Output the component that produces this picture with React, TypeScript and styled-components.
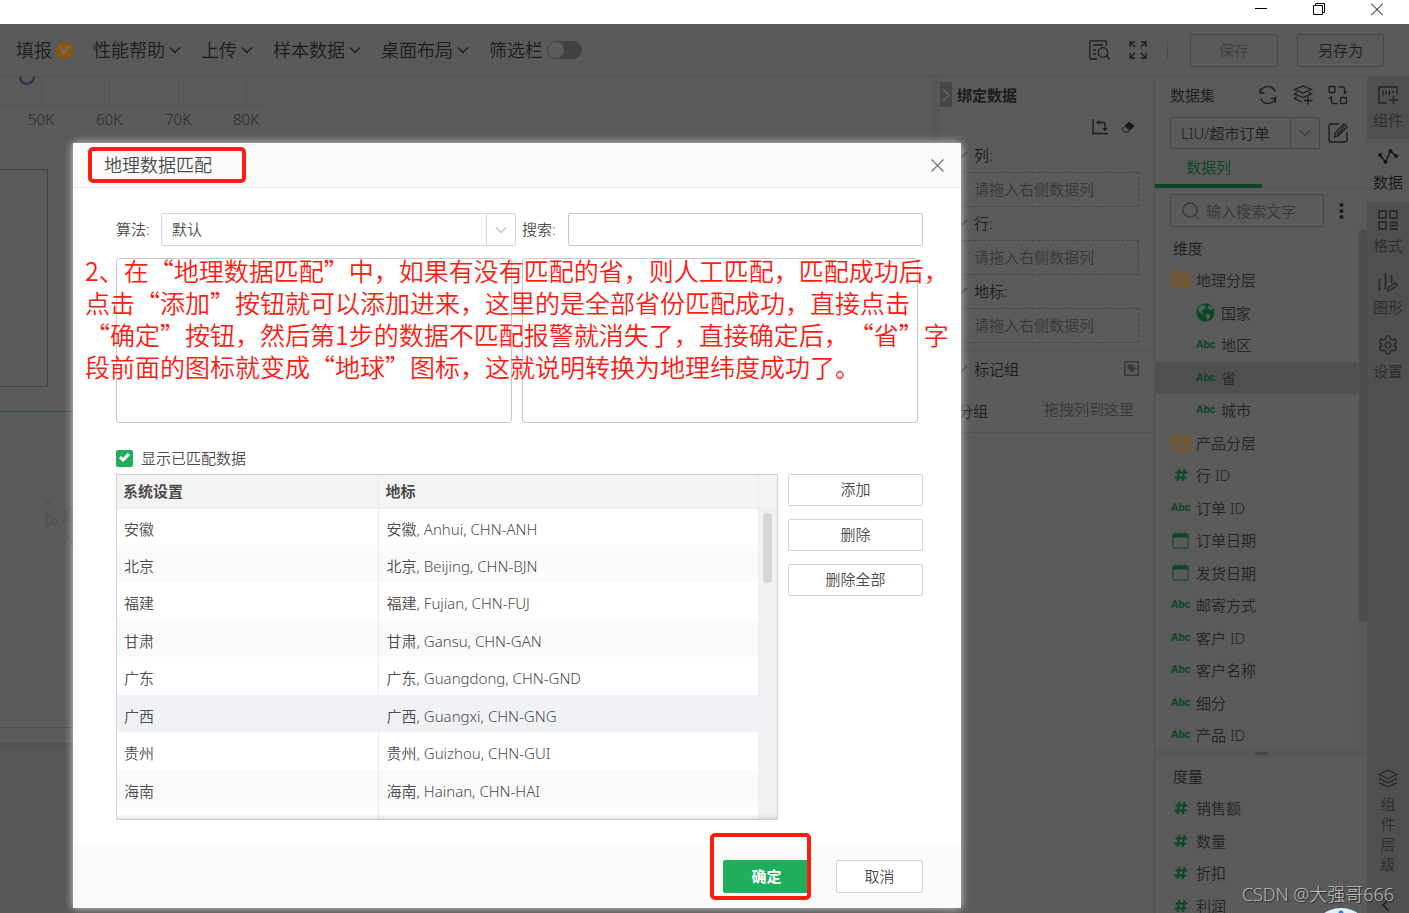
import React from "react";
import styled, { createGlobalStyle, css } from "styled-components";
import { Settings } from "lucide-react";

const color = {
  base: "#5a5a5a",
  panel: "#5b5b5b",
  gutter: "#555858",
  rail: "#505050",
  line: "#525252",
  border: "#464646",
  ink: "#1c1c1c",
  soft: "#242424",
  muted: "#383838",
  green: "#0b4826",
  orange: "#8a570c",
  red: "#ff1a12",
  brand: "#1eae5c",
  text: "#4c4c4c",
};

const GlobalStyle = createGlobalStyle`
  * { box-sizing: border-box; }
  body {
    margin: 0;
    background: ${color.base};
    font-family: "Noto Sans", "Noto Sans CJK SC", sans-serif;
    font-size: 15px;
    font-weight: 350;
    line-height: 20px;
    color: ${color.ink};
  }
  button, input, select { font: inherit; color: inherit; margin: 0; }
  button { padding: 0; border: 0; background: none; }
  svg { display: block; flex: none; }
`;

/* ---------- page frame ---------- */

const Page = styled.div`
  position: relative;
  height: 100vh;
  display: flex;
  flex-direction: column;
  overflow: hidden;
`;

const TitleBar = styled.div`
  flex: none;
  height: 24px;
  padding: 0 20px;
  display: flex;
  justify-content: flex-end;
  align-items: flex-start;
  gap: 34px;
  background: #fff;
`;

const WindowButton = styled.button`
  width: 24px;
  height: 19px;
  display: grid;
  place-items: center;
`;

const Toolbar = styled.header`
  flex: none;
  height: 53px;
  padding: 0 25px 0 16px;
  display: flex;
  align-items: center;
  border-bottom: 1px solid ${color.line};
`;

const Menu = styled.nav`
  display: flex;
  align-items: center;
  gap: 20px;
`;

const MenuButton = styled.button`
  display: flex;
  align-items: center;
  gap: 4px;
  font-size: 18px;
  line-height: 24px;
`;

const MenuSwitch = styled.label`
  display: flex;
  align-items: center;
  gap: 4px;
  font-size: 18px;
  line-height: 24px;
`;

const Switch = styled.input`
  appearance: none;
  width: 35px;
  height: 18px;
  border-radius: 9px;
  background: #424242;
  padding: 1px;
  &::before {
    content: "";
    display: block;
    width: 16px;
    height: 16px;
    border-radius: 50%;
    background: #5c5c5c;
  }
`;

const Tools = styled.div`
  margin-left: auto;
  display: flex;
  align-items: center;
`;

const ToolIcon = styled.button<{ $gap: number }>`
  margin-right: ${(p) => p.$gap}px;
`;

const Separator = styled.span`
  width: 1px;
  height: 17px;
  margin-right: 22px;
  background: #4b4b4b;
`;

const ToolButton = styled.button<{ $last?: boolean }>`
  width: ${(p) => (p.$last ? 87 : 88)}px;
  height: 33px;
  margin-left: ${(p) => (p.$last ? 19 : 0)}px;
  border: 1px solid ${color.border};
  border-radius: 2px;
  &:disabled { color: #404040; }
`;

const Main = styled.main`
  flex: 1;
  min-height: 0;
  display: flex;
`;

/* ---------- canvas behind the dialog ---------- */

const Canvas = styled.section`
  flex: 1;
  min-width: 0;
  display: flex;
  flex-direction: column;
  background: ${color.panel};
`;

const Card = styled.div`
  width: 48px;
  height: 218px;
  border: 1px solid #424242;
  border-left: 0;
`;

const MapArea = styled.div`
  height: 317px;
  margin-top: 24px;
  padding: 84px 0 0 42px;
  border-top: 1px solid #2f4c55;
  border-bottom: 1px solid #3d565b;
`;

const CanvasEnd = styled.div`
  flex: 1;
  margin-top: 15px;
  background: linear-gradient(#525454, #575959 10px);
`;

const Gutter = styled.div`
  flex: none;
  width: 9px;
  background: ${color.gutter};
`;

/* ---------- binding panel ---------- */

const BindPanel = styled.aside`
  flex: none;
  width: 215px;
  background: ${color.panel};
  border-right: 1px solid ${color.line};
`;

const BindHead = styled.div`
  height: 38px;
  padding-bottom: 3px;
  display: flex;
  align-items: center;
  gap: 5px;
  font-weight: 700;
`;

const Collapse = styled.button`
  width: 12px;
  height: 25px;
  border-radius: 0 2px 2px 0;
  background: #474747;
  display: grid;
  place-items: center;
`;

const BindTools = styled.div`
  height: 24px;
  padding-right: 19px;
  display: flex;
  justify-content: flex-end;
  align-items: center;
  gap: 13px;
`;

const BindGroup = styled.div`
  height: 68px;
  padding: 2px 15px 0 18px;
`;

const BindLabel = styled.div`
  height: 27px;
  display: flex;
  align-items: center;
  gap: 6px;
`;

const DropZone = styled.div`
  height: 35px;
  margin-top: 4px;
  padding-left: 15px;
  border: 1px dashed ${color.border};
  line-height: 32px;
  color: ${color.muted};
`;

const MarkGroup = styled.div`
  height: 83px;
  margin-top: 7px;
  padding: 4px 15px 0 18px;
  border: solid ${color.line};
  border-width: 1px 0;
`;

const MarkRow = styled.div`
  display: flex;
  justify-content: space-between;
  align-items: center;
`;

const GroupRow = styled(MarkRow)`
  padding: 17px 5px 0 0;
`;

const Muted = styled.span`
  padding-bottom: 4px;
  color: ${color.muted};
`;

/* ---------- data panel ---------- */

const DataPanel = styled.aside`
  flex: none;
  width: 212px;
  display: flex;
  flex-direction: column;
  background: ${color.panel};
`;

const DataHead = styled.div`
  flex: none;
  height: 40px;
  padding: 0 19px 5px 15px;
  display: flex;
  align-items: center;
  gap: 15px;
`;

const Grow = styled.span`
  flex: 1;
`;

const FieldRow = styled.div`
  flex: none;
  display: flex;
  align-items: center;
  gap: 8px;
  padding: 0 19px 0 15px;
`;

const Picker = styled.div<{ $light?: boolean; $cell: number }>`
  position: relative;
  flex: 1;
  height: ${(p) => (p.$light ? 33 : 32)}px;
  display: flex;
  border: 1px solid ${(p) => (p.$light ? "#d6d6d6" : color.border)};
  border-radius: 2px;
  select {
    appearance: none;
    width: 100%;
    border: 0;
    padding: 0 ${(p) => p.$cell + 2}px 1px 10px;
    background: none;
    outline: 0;
  }
  > span {
    position: absolute;
    top: 0;
    right: 0;
    bottom: 0;
    width: ${(p) => p.$cell}px;
    border-left: 1px solid ${(p) => (p.$light ? "#d6d6d6" : color.border)};
    display: grid;
    place-items: center;
    pointer-events: none;
  }
`;

const TabBar = styled.div`
  flex: none;
  height: 39px;
  margin-bottom: 6px;
  border-bottom: 1px solid ${color.line};
`;

const Tab = styled.button`
  width: 107px;
  height: 39px;
  border-bottom: 4px solid ${color.green};
  color: ${color.green};
`;

const SearchBox = styled.label`
  flex: 1;
  min-width: 0;
  height: 33px;
  padding-left: 10px;
  display: flex;
  align-items: center;
  gap: 6px;
  border: 1px solid ${color.border};
  border-radius: 2px;
  input {
    flex: 1;
    min-width: 0;
    padding: 0;
    border: 0;
    background: none;
    outline: 0;
  }
  input::placeholder { color: ${color.muted}; }
`;

const ScrollArea = styled.div`
  flex: none;
  height: 522px;
  display: flex;
  overflow: hidden;
`;

const ScrollTrack = styled.div`
  flex: none;
  width: 9px;
  padding: 3px 0 0 1px;
  background: #585a5a;
`;

const ScrollThumb = styled.div`
  height: 392px;
  border-radius: 4px;
  background: #4c4c4c;
`;

const FieldList = styled.ul`
  flex: 1;
  margin: 0;
  padding: 5px 0 0;
  list-style: none;
`;

const MeasureList = styled(FieldList)`
  min-height: 0;
  overflow: hidden;
  padding-top: 2px;
`;

const FieldItem = styled.li<{ $level?: number; $active?: boolean }>`
  height: 32px;
  padding: 0 0 1px ${(p) => (p.$level ? 41 : 16)}px;
  display: flex;
  align-items: center;
  gap: 6px;
  color: ${color.soft};
  background: ${(p) => (p.$active ? "#505050" : "none")};
  &:nth-child(even) { height: 33px; }
`;

const ListTitle = styled(FieldItem)`
  padding-left: 18px;
  color: ${color.ink};
`;

const Glyph = styled.span`
  width: 19px;
  height: 20px;
  display: grid;
  place-items: center;
  color: ${color.green};
`;

const Abc = styled.b`
  font: 700 11px/20px Roboto, sans-serif;
`;

const Splitter = styled.div`
  flex: none;
  height: 9px;
  display: grid;
  place-items: center;
  background: #565858;
  &::before {
    content: "";
    width: 13px;
    height: 3px;
    border-radius: 1px;
    background: #444;
  }
`;

/* ---------- icon rail ---------- */

const Rail = styled.nav`
  flex: none;
  width: 42px;
  display: flex;
  flex-direction: column;
  background: ${color.rail};
`;

const RailButton = styled.button<{ $active?: boolean }>`
  height: 62px;
  padding-bottom: 2px;
  display: flex;
  flex-direction: column;
  align-items: center;
  justify-content: center;
  gap: 5px;
  color: ${(p) => (p.$active ? "#161616" : "#2c2c2c")};
  background: ${(p) => (p.$active ? color.base : "none")};
  &:nth-child(even) { height: 63px; }
`;

const RailLayers = styled.button`
  margin: auto 0 0;
  padding: 0 13px;
  display: flex;
  flex-direction: column;
  align-items: center;
  gap: 5px;
  color: #2c2c2c;
  span { width: 15px; white-space: normal; word-break: break-all; }
`;

const RailCollapse = styled.button`
  height: 39px;
  padding: 22px 0 0 15px;
  color: ${color.ink};
`;

/* ---------- dialog ---------- */

const Dialog = styled.section`
  position: absolute;
  left: 73px;
  right: 448px;
  top: 143px;
  display: flex;
  flex-direction: column;
  background: #fff;
  border-radius: 2px;
  box-shadow: 0 0 8px rgba(255, 255, 255, 0.75);
  color: ${color.text};
`;

const DialogHead = styled.div`
  height: 45px;
  padding: 0 17px 0 31px;
  display: flex;
  align-items: center;
  justify-content: space-between;
  background: #fafafa;
  border-bottom: 1px solid #ebebeb;
  h2 { margin: 0; font-size: 18px; font-weight: 350; line-height: 24px; }
`;

const DialogBody = styled.div`
  padding: 25px 38px 25px 43px;
`;

const FormRow = styled.div`
  display: flex;
  align-items: center;
  label { flex: none; width: 45px; padding-bottom: 2px; }
  label:not(:first-child) { margin-left: 6px; width: 46px; }
`;

const TextInput = styled.input`
  flex: 1;
  min-width: 0;
  height: 33px;
  border: 1px solid #c8c8c8;
  border-radius: 2px;
  padding: 0;
  text-indent: 10px;
`;

const ListRow = styled.div`
  display: flex;
  gap: 10px;
  margin: 12px 5px 0 0;
`;

const ListBox = styled.select`
  flex: 1;
  min-width: 0;
  height: 165px;
  border: 1px solid #c8c8c8;
  border-radius: 3px;
  background: #fff;
  outline: 0;
`;

const CheckRow = styled.label`
  position: relative;
  width: max-content;
  margin: 25px 0 6px;
  display: flex;
  align-items: center;
  gap: 8px;
  svg { position: absolute; left: 3px; top: 5px; }
`;

const Checkbox = styled.input`
  appearance: none;
  width: 17px;
  height: 17px;
  border-radius: 2px;
  background: ${color.brand};
`;

const TableRow = styled.div`
  display: flex;
  gap: 10px;
`;

const TableFrame = styled.div`
  position: relative;
  flex: 1;
  height: 346px;
  display: flex;
  overflow: hidden;
  border: 1px solid #cfcfcf;
  &::after {
    content: "";
    position: absolute;
    left: 0;
    right: 0;
    bottom: 0;
    height: 5px;
    background: linear-gradient(rgba(0, 0, 0, 0), rgba(0, 0, 0, 0.1));
  }
`;

const Table = styled.table`
  flex: 1;
  height: max-content;
  border-collapse: collapse;
  table-layout: fixed;
  th, td { padding: 0 8px; text-align: left; }
  th:first-child, td:first-child { width: 261px; border-right: 1px solid #ebebeb; }
  td:first-child { padding-left: 7px; }
  th {
    height: 33px;
    padding: 0 7px;
    background: #f3f3f3;
    border-bottom: 1px solid #ebebeb;
    font-weight: 700;
  }
  th:first-child { padding-left: 6px; }
`;

const Row = styled.tr<{ $hover?: boolean }>`
  height: 38px;
  background: #fff;
  td { padding-top: 4px; }
  &:nth-child(even) { height: 37px; background: ${(p) => (p.$hover ? "#f0f1f4" : "#fafafa")}; }
  &:first-child { height: 37px; }
`;

const TableScroll = styled.div`
  width: 19px;
  background: #f0f1f3;
  &::before {
    content: "";
    display: block;
    height: 33px;
    background: #f3f3f3;
    border: solid #ebebeb;
    border-width: 0 0 1px 1px;
  }
  &::after {
    content: "";
    display: block;
    width: 9px;
    height: 70px;
    margin: 4px 5px;
    border-radius: 4px;
    background: #d6d6d6;
  }
`;

const SideButtons = styled.div`
  flex: none;
  width: 135px;
  display: flex;
  flex-direction: column;
  gap: 13px;
`;

const outlined = css`
  padding-bottom: 2px;
  border: 1px solid #d2d2d2;
  border-radius: 2px;
  background: #fff;
`;

const SideButton = styled.button`
  height: 32px;
  ${outlined}
`;

const DialogFoot = styled.div`
  height: 63px;
  padding: 0 38px;
  display: flex;
  align-items: center;
  justify-content: flex-end;
  gap: 26px;
  background: #fafafa;
`;

const FootButton = styled.button<{ $primary?: boolean }>`
  width: 87px;
  height: 33px;
  ${outlined}
  ${(p) =>
    p.$primary &&
    css`
      border-color: ${color.brand};
      background: ${color.brand};
      color: #fff;
      font-weight: 700;
    `}
`;

/* ---------- annotations over the dialog ---------- */

const Mark = styled.div<{ $foot?: boolean }>`
  position: absolute;
  border: 4px solid ${color.red};
  border-radius: 5px;
  pointer-events: none;
  ${(p) =>
    p.$foot
      ? css`right: 150px; bottom: 8px; width: 101px; height: 67px;`
      : css`left: 15px; top: 4px; width: 158px; height: 36px;`}
`;

const Note = styled.p`
  position: absolute;
  left: 12px;
  top: 111px;
  margin: 0;
  font-family: "Noto Sans CJK SC", sans-serif;
  font-size: 25px;
  font-weight: 350;
  line-height: 32px;
  white-space: nowrap;
  text-spacing-trim: space-all;
  color: ${color.red};
  pointer-events: none;
  span { display: block; }
`;

const Watermark = styled.div`
  position: absolute;
  right: 15px;
  bottom: 7px;
  font-family: "Open Sans", "Noto Sans CJK SC", sans-serif;
  font-size: 18px;
  font-weight: 300;
  line-height: 24px;
  color: #c4c4c4;
  text-shadow: 1px 1px 1px #222;
`;

const Bubble = styled.div`
  position: absolute;
  right: 38px;
  bottom: -55px;
  width: 60px;
  height: 60px;
  border-radius: 50%;
  background: radial-gradient(circle at 30px 5px, #2a7fe0 2px, #e6f0fb 3px);
`;

/* ---------- icons ---------- */

type IconProps = { w?: number; h?: number; sw?: number; stroke?: string; children: React.ReactNode };
const Icon = ({ w = 20, h = w, sw = 1.5, stroke = "currentColor", children }: IconProps) => (
  <svg width={w} height={h} viewBox={`0 0 ${w} ${h}`} fill="none" stroke={stroke} strokeWidth={sw} aria-hidden="true">
    {children}
  </svg>
);

const Chevron = ({ stroke = "currentColor" }: { stroke?: string }) => (
  <Icon w={12} h={8} stroke={stroke} sw={1.3}>
    <path d="M1 1.5 6 6.5 11 1.5" />
  </Icon>
);

const Hash = () => (
  <Icon w={14} h={14} sw={2}>
    <path d="M5.5 1 3.5 13M10.5 1 8.5 13M1.5 4.5h12M.5 9.5h12" />
  </Icon>
);

const Calendar = () => (
  <Icon w={17} h={17} sw={1}>
    <path d="M1 3.5h15v12.5H1z" />
    <path d="M.5 1.5H3V.5h1.500v1h3V.500H9v1h3V.500h1.500v1h3V5.500H.500z" fill="currentColor" stroke="none" />
  </Icon>
);

const Folder = () => (
  <Icon w={19} h={18} sw={1.5} stroke={color.orange}>
    <path d="M11 16H2a1 1 0 0 1-1-1V2a1 1 0 0 1 1-1h5l2 2h8a1 1 0 0 1 1 1v6" />
    <path d="M1 6.500h17" />
    <path d="M4 9.500q3 2 6 0M4.500 13h5" strokeWidth="1.2" />
    <circle cx="15" cy="13.5" r="3" strokeWidth="1.2" />
    <path d="m13 11.500 4 4" strokeWidth="1.2" />
  </Icon>
);

const Globe = () => (
  <Icon w={19} h={19}>
    <circle cx="9.5" cy="9.5" r="9.2" fill="currentColor" stroke="none" />
    <path
      d="M3 4.5 5.500 2l3 .5L10 4 8.500 6 6.500 7 5.500 9l2 1.500-.5 1L4 9.800 2 7zM11.500 3l3-.5 2.500 2.700-1.500 2-2.500-.7zM9 12l3-1 2.500 1.500-1.500 3-2 1.700-.5-3z"
      fill={color.panel}
      stroke="none"
    />
  </Icon>
);

/* ---------- data ---------- */

type Kind = "folder" | "globe" | "abc" | "hash" | "date";
type Field = { kind: Kind; name: string; level?: number; active?: boolean };

const dimensions: Field[] = [
  { kind: "folder", name: "地理分层" },
  { kind: "globe", name: "国家", level: 1 },
  { kind: "abc", name: "地区", level: 1 },
  { kind: "abc", name: "省", level: 1, active: true },
  { kind: "abc", name: "城市", level: 1 },
  { kind: "folder", name: "产品分层" },
  { kind: "hash", name: "行 ID" },
  { kind: "abc", name: "订单 ID" },
  { kind: "date", name: "订单日期" },
  { kind: "date", name: "发货日期" },
  { kind: "abc", name: "邮寄方式" },
  { kind: "abc", name: "客户 ID" },
  { kind: "abc", name: "客户名称" },
  { kind: "abc", name: "细分" },
  { kind: "abc", name: "产品 ID" },
];

const measures: Field[] = ["销售额", "数量", "折扣", "利润"].map((name) => ({ kind: "hash", name }));

const matches = [
  ["安徽", "安徽, Anhui, CHN-ANH"],
  ["北京", "北京, Beijing, CHN-BJN"],
  ["福建", "福建, Fujian, CHN-FUJ"],
  ["甘肃", "甘肃, Gansu, CHN-GAN"],
  ["广东", "广东, Guangdong, CHN-GND"],
  ["广西", "广西, Guangxi, CHN-GNG"],
  ["贵州", "贵州, Guizhou, CHN-GUI"],
  ["海南", "海南, Hainan, CHN-HAI"],
];

const noteLines = [
  "2、在“地理数据匹配”中，如果有没有匹配的省，则人工匹配，匹配成功后，",
  "点击“添加”按钮就可以添加进来，这里的是全部省份匹配成功，直接点击",
  "“确定”按钮，然后第1步的数据不匹配报警就消失了，直接确定后，“省”字",
  "段前面的图标就变成“地球”图标，这就说明转换为地理纬度成功了。",
];

const kindIcon: Record<Kind, React.ReactNode> = {
  folder: <Folder />,
  globe: <Globe />,
  abc: <Abc>Abc</Abc>,
  hash: <Hash />,
  date: <Calendar />,
};

const FieldRowItem = ({ field }: { field: Field }) => (
  <FieldItem $level={field.level} $active={field.active}>
    <Glyph>{kindIcon[field.kind]}</Glyph>
    {field.name}
  </FieldItem>
);

const railItems = [
  {
    label: "组件",
    icon: (
      <Icon sw={1.8}>
        <path d="M19 9V2H1v16h8" />
        <path d="M5 5.5v6M8.200 5.500v4M11.400 5.500v5M14.600 5.500v3" strokeWidth="1.5" />
        <path d="M15.500 10.500v9M11 15h9" />
      </Icon>
    ),
  },
  {
    label: "数据",
    active: true,
    icon: (
      <Icon>
        <path d="M2 8 7.5 15 12.5 4 18 9" />
        <g fill="currentColor" stroke="none">
          <circle cx="2" cy="8" r="2" />
          <circle cx="7.5" cy="15" r="2" />
          <circle cx="12.5" cy="4" r="2" />
          <circle cx="18" cy="9" r="2" />
        </g>
      </Icon>
    ),
  },
  {
    label: "格式",
    icon: (
      <Icon sw={1.8}>
        <path d="M1 1h7v7H1zM12 1h7v7h-7zM1 12h7v7H1zM11.500 12.500H20M11.500 15.700H20M11.500 19H20" />
      </Icon>
    ),
  },
  {
    label: "图形",
    icon: (
      <Icon sw={2}>
        <path d="M1.500 7v12M7.500 1v16M13.500 3v8" />
        <path d="m9.500 19 1-3.200 6.500-5.300 2.200 2.500-6.500 5.200z" strokeWidth="1.5" />
      </Icon>
    ),
  },
  { label: "设置", icon: <Settings size={22} strokeWidth={1.8} /> },
];

/* ---------- page ---------- */

export default function App() {
  return (
    <Page>
      <GlobalStyle />
      <TitleBar>
        <WindowButton aria-label="最小化">
          <Icon w={12} h={13} sw={1} stroke="#000"><path d="M0 5.5h12" /></Icon>
        </WindowButton>
        <WindowButton aria-label="还原">
          <Icon w={12} h={13} sw={1} stroke="#000"><path d="M.5 2.5h9v9h-9zM2.500 2.500v-2h9v9h-2" /></Icon>
        </WindowButton>
        <WindowButton aria-label="关闭窗口">
          <Icon w={12} h={13} sw={1} stroke="#000"><path d="m0 .5 12 12M12 .5l-12 12" /></Icon>
        </WindowButton>
      </TitleBar>

      <Toolbar>
        <Menu>
          <MenuButton>
            填报
            <Icon w={17} h={17}>
              <circle cx="8.5" cy="8.5" r="8.5" fill={color.orange} stroke="none" />
              <path d="M4 5.500h1.500l2 6 4-6h2" stroke="#707070" strokeWidth="2" />
            </Icon>
          </MenuButton>
          {["性能帮助", "上传", "样本数据", "桌面布局"].map((item) => (
            <MenuButton key={item}>
              {item}
              <Chevron />
            </MenuButton>
          ))}
          <MenuSwitch>
            筛选栏
            <Switch type="checkbox" role="switch" />
          </MenuSwitch>
        </Menu>
        <Tools>
          <ToolIcon $gap={19} aria-label="预览">
            <Icon w={21} h={20} sw={1.3}>
              <path d="M8 19H1.500A.8.8 0 0 1 .8 18.200V1.500A.8.8 0 0 1 1.500.8h15a.8.8 0 0 1 .8.700V6M4 5h10M4 10h3M4 14h3" />
              <circle cx="14" cy="12.5" r="4.8" />
              <path d="m17.500 16 3 3.200" />
            </Icon>
          </ToolIcon>
          <ToolIcon $gap={20} aria-label="全屏">
            <Icon w={18} h={18} sw={1.3}>
              <path d="M1 6V1h5M1 1l5 5M12 1h5v5M17 1l-5 5M1 12v5h5M1 17l5-5M17 12v5h-5M17 17l-5-5" />
            </Icon>
          </ToolIcon>
          <Separator />
          <ToolButton disabled>保存</ToolButton>
          <ToolButton $last>另存为</ToolButton>
        </Tools>
      </Toolbar>

      <Main>
        <Canvas>
          <svg width="270" height="92" viewBox="0 0 270 92" fill="none" stroke="#545454">
            <path d="M41.500 0v33M109.500 0v33M178.500 0v33M246.500 0v33M0 28.500h264" />
            <circle cx="27" cy="0" r="7" stroke="#36324f" strokeWidth="2.5" />
            <g fill="#2a2a2a" stroke="none" fontSize="15" textAnchor="middle">
              <text x="41" y="48">50K</text>
              <text x="109" y="48">60K</text>
              <text x="178" y="48">70K</text>
              <text x="246" y="48">80K</text>
            </g>
          </svg>
          <Card />
          <MapArea>
            <svg width="32" height="56" viewBox="0 0 32 56" fill="#575757" stroke="#505050">
              <path d="M5 6h2v2H5zM4 16l8 6-3 6-5 3zM12 22l4 3-2 4-4-1zM22 14l4 2 5-6v18l-4-4-6 2 3-6zM26 40l5-2v14z" />
            </svg>
          </MapArea>
          <CanvasEnd />
        </Canvas>
        <Gutter />

        <BindPanel>
          <BindHead>
            <Collapse aria-label="收起">
              <Icon w={8} h={14} stroke="#666"><path d="m1 1 6 6-6 6" /></Icon>
            </Collapse>
            绑定数据
          </BindHead>
          <BindTools>
            <Icon w={16} h={16} sw={1.3}>
              <path d="M1 0v14.500h15M5 3.500h6.500a1.500 1.500 0 0 1 1.500 1.500v6" />
              <path d="M4 3.500 7.500 1v5zM10.500 9h5L13 12.500z" fill="currentColor" stroke="none" />
            </Icon>
            <Icon w={14} h={12} sw={1}>
              <path d="m8 1 5 4-4 4-5-4z" fill="currentColor" />
              <path d="M4 5 1 8l2.500 3H7l2-2z" />
            </Icon>
          </BindTools>
          {["列:", "行:", "地标:"].map((label) => (
            <BindGroup key={label}>
              <BindLabel>
                <Icon w={10} h={8} stroke="#333"><path d="m0 2 4 4 5-5" /></Icon>
                {label}
              </BindLabel>
              <DropZone>请拖入右侧数据列</DropZone>
            </BindGroup>
          ))}
          <MarkGroup>
            <MarkRow>
              <BindLabel>
                <Icon w={10} h={8} stroke="#333"><path d="m0 2 4 4 5-5" /></Icon>
                标记组
              </BindLabel>
              <Icon w={15} h={15} stroke="#3a3a3a">
                <path d="M.75.75h13.5v13.5H.75z" />
                <path d="M3.500 3.500h4.500l4 4-4 4-4.500-4z" fill="#3a3a3a" stroke="none" />
              </Icon>
            </MarkRow>
            <GroupRow>
              <span>分组</span>
              <Muted>拖拽列到这里</Muted>
            </GroupRow>
          </MarkGroup>
        </BindPanel>

        <DataPanel>
          <DataHead>
            数据集
            <Grow />
            <Icon w={20} h={20} sw={1.3}>
              <path d="M2 8.500A8 8 0 0 1 17.300 6.500M18 11.500A8 8 0 0 1 2.700 13.500M17.500 18v-4.500h-4.500M2 3.500V8h4.500" />
            </Icon>
            <Icon w={20} h={20} sw={1.3}>
              <path d="M10 1 18.500 4.500 10 8 1.500 4.500zM4 7.500 1.500 9l8.500 3.500 8.500-3.500L16 7.500M4 12l-2.500 1.500L9 17M15 11.500v8M11 15.500h8.500" />
            </Icon>
            <Icon w={20} h={20} sw={1.3}>
              <rect x="1" y="1.5" width="6" height="6" rx="1" />
              <rect x="12.5" y="12.5" width="6" height="6" rx="1" />
              <path d="M10.500 2H15a1.500 1.500 0 0 1 1.500 1.500V9M16.500 9l2-2.500M9.500 18.500H5A1.500 1.500 0 0 1 3.500 17v-5.500M3.500 11.500l-2.500 2.500" />
            </Icon>
          </DataHead>
          <FieldRow>
            <Picker $cell={29}>
              <select aria-label="数据集" defaultValue="LIU/超市订单">
                <option>LIU/超市订单</option>
              </select>
              <span><Chevron stroke="#424242" /></span>
            </Picker>
            <Icon w={20} h={20} sw={1.3}>
              <path d="M11 1H3A2 2 0 0 0 1 3v14a2 2 0 0 0 2 2h14a2 2 0 0 0 2-2V9M6.500 14l1-4.500L16 1l3 3-8.500 8.500zM14 3l3 3M9 11.500l6-6" />
            </Icon>
          </FieldRow>
          <TabBar>
            <Tab>数据列</Tab>
          </TabBar>
          <FieldRow>
            <SearchBox>
              <Icon w={19} h={18} stroke="#3a3a3a">
                <circle cx="9" cy="8" r="7" />
                <path d="m14 13 4 4" />
              </Icon>
              <input placeholder="输入搜索文字" />
            </SearchBox>
            <Icon w={16} h={16}>
              <g fill="currentColor" stroke="none">
                <circle cx="9.5" cy="2" r="2" />
                <circle cx="9.5" cy="8" r="2" />
                <circle cx="9.5" cy="14" r="2" />
              </g>
            </Icon>
          </FieldRow>
          <ScrollArea>
            <FieldList>
              <ListTitle>维度</ListTitle>
              {dimensions.map((f) => (
                <FieldRowItem key={f.name} field={f} />
              ))}
            </FieldList>
            <ScrollTrack>
              <ScrollThumb />
            </ScrollTrack>
          </ScrollArea>
          <Splitter />
          <MeasureList>
            <ListTitle>度量</ListTitle>
            {measures.map((f) => (
              <FieldRowItem key={f.name} field={f} />
            ))}
          </MeasureList>
        </DataPanel>

        <Rail>
          {railItems.map((item) => (
            <RailButton key={item.label} $active={item.active}>
              {item.icon}
              {item.label}
            </RailButton>
          ))}
          <RailLayers>
            <Icon w={20} h={20}>
              <path d="M10 1 19 5.500 10 10 1 5.500zM1 9.500l9 4.500 9-4.500M1 13.500l9 4.500 9-4.500" />
            </Icon>
            <span>组件层级</span>
          </RailLayers>
          <RailCollapse aria-label="展开">
            <Icon w={8} h={14}><path d="M7 1 1 7l6 6" /></Icon>
          </RailCollapse>
        </Rail>
      </Main>

      <Dialog role="dialog" aria-label="地理数据匹配">
        <DialogHead>
          <h2>地理数据匹配</h2>
          <button aria-label="关闭">
            <Icon w={13} h={13} sw={1.3} stroke="#777"><path d="m.5.5 12 12M12.500.5l-12 12" /></Icon>
          </button>
        </DialogHead>
        <DialogBody>
          <FormRow>
            <label htmlFor="algorithm">算法:</label>
            <Picker $light $cell={29}>
              <select id="algorithm" defaultValue="默认">
                <option>默认</option>
              </select>
              <span><Chevron stroke="#c4c4c4" /></span>
            </Picker>
            <label htmlFor="keyword">搜索:</label>
            <TextInput id="keyword" />
          </FormRow>
          <ListRow>
            <ListBox multiple aria-label="未匹配数据" />
            <ListBox multiple aria-label="可选地标" />
          </ListRow>
          <CheckRow>
            <Checkbox type="checkbox" defaultChecked />
            <Icon w={11} h={9} sw={3} stroke="#fff"><path d="m1 4 3 3 6-6" /></Icon>
            显示已匹配数据
          </CheckRow>
          <TableRow>
            <TableFrame>
              <Table>
                <thead>
                  <tr>
                    <th>系统设置</th>
                    <th>地标</th>
                  </tr>
                </thead>
                <tbody>
                  {matches.map(([name, place]) => (
                    <Row key={name} $hover={name === "广西"}>
                      <td>{name}</td>
                      <td>{place}</td>
                    </Row>
                  ))}
                  <Row>
                    <td />
                    <td />
                  </Row>
                </tbody>
              </Table>
              <TableScroll />
            </TableFrame>
            <SideButtons>
              <SideButton>添加</SideButton>
              <SideButton>删除</SideButton>
              <SideButton>删除全部</SideButton>
            </SideButtons>
          </TableRow>
        </DialogBody>
        <DialogFoot>
          <FootButton $primary>确定</FootButton>
          <FootButton>取消</FootButton>
        </DialogFoot>
        <Mark />
        <Mark $foot />
        <Note>
          {noteLines.map((line) => (
            <span key={line}>{line}</span>
          ))}
        </Note>
      </Dialog>

      <Bubble />
      <Watermark>CSDN @大强哥666</Watermark>
    </Page>
  );
}
